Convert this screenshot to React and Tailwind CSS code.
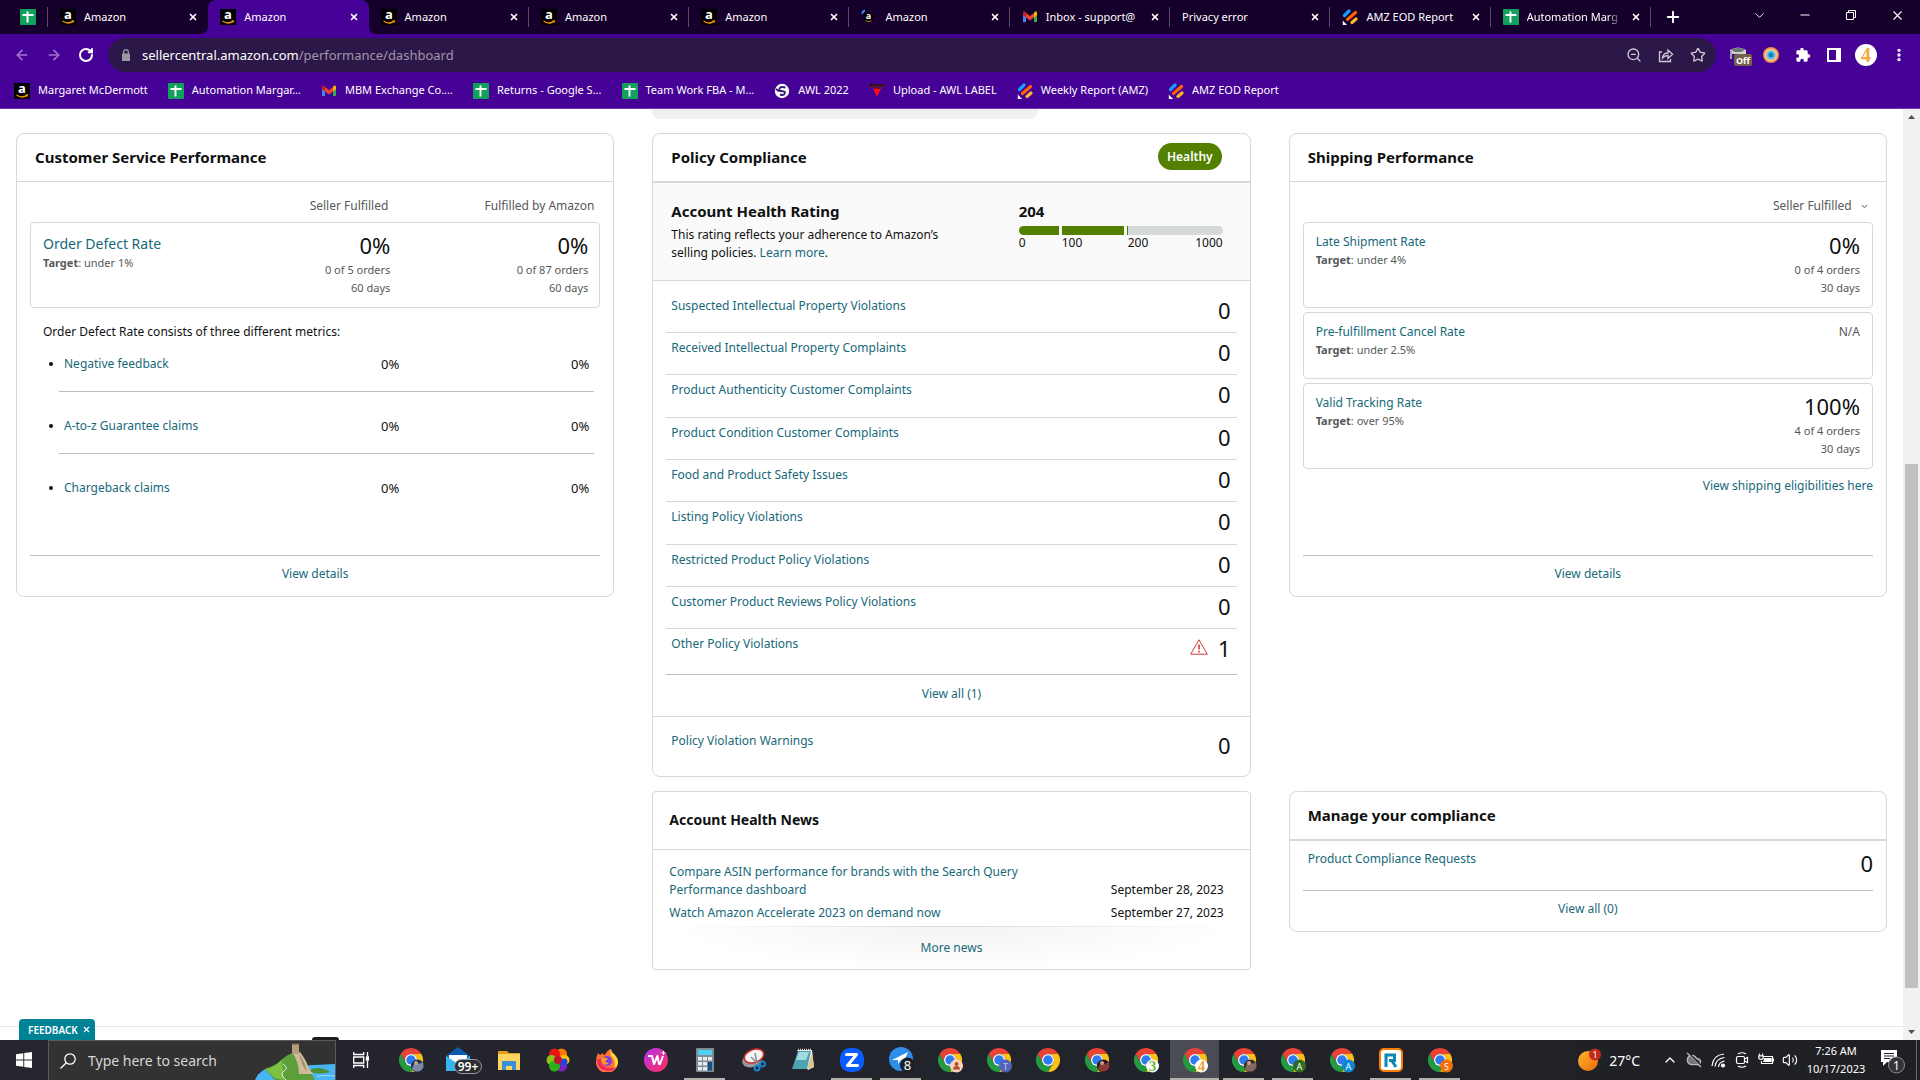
import React, { useState } from 'react';
import {
  ArrowLeft, ArrowRight, ChevronDown, ChevronUp, CloudOff, EllipsisVertical, Minus,
  Plus, RotateCw, Star, Volume2, X, ZoomOut,
} from 'lucide-react';

const VIOLATIONS = [
  { label: 'Suspected Intellectual Property Violations', count: 0 },
  { label: 'Received Intellectual Property Complaints', count: 0 },
  { label: 'Product Authenticity Customer Complaints', count: 0 },
  { label: 'Product Condition Customer Complaints', count: 0 },
  { label: 'Food and Product Safety Issues', count: 0 },
  { label: 'Listing Policy Violations', count: 0 },
  { label: 'Restricted Product Policy Violations', count: 0 },
  { label: 'Customer Product Reviews Policy Violations', count: 0 },
  { label: 'Other Policy Violations', count: 1 },
];

const DEFECT_METRICS = ['Negative feedback', 'A-to-z Guarantee claims', 'Chargeback claims'];

/* ---------- Favicons ---------- */

const AmazonIcon = () => (
  <svg className="w-4 h-4 shrink-0 overflow-visible" viewBox="0 0 16 16">
    <rect width="16" height="16" fill="#000" />
    <text x="8" y="10" textAnchor="middle" fontSize="13" fontWeight="700" fontFamily="Open Sans, sans-serif" fill="#fff">a</text>
    <path d="M2.5 12Q8 15.8 13 12.4" fill="none" stroke="#f90" strokeWidth="1.3" />
    <path d="M11.6 11.7h2.2l-.5 2" fill="none" stroke="#f90" strokeWidth=".9" />
  </svg>
);

const AmazonSmallIcon = () => (
  <svg className="w-4 h-4 shrink-0 overflow-visible" viewBox="0 0 16 16">
    <circle cx="7.5" cy="8" r="5" fill="#000" />
    <path d="M1 4.6Q2 2 4 1.4" fill="none" stroke="#3b8df0" strokeWidth="2" />
    <text x="7.5" y="10" textAnchor="middle" fontSize="9" fontWeight="700" fontFamily="Open Sans, sans-serif" fill="#fff">a</text>
    <path d="M4.5 11.8q3 1.6 6 0" fill="none" stroke="#b87414" strokeWidth="1" />
  </svg>
);

const SheetsIcon = () => (
  <svg className="w-4 h-4 shrink-0" viewBox="0 0 16 16">
    <rect width="16" height="16" rx="1" fill="#12a15c" />
    <path d="M7.5 2.5v11M2.5 6h11" stroke="#fff" strokeWidth="1.9" />
  </svg>
);

const GmailIcon = () => (
  <svg className="w-4 h-4 shrink-0" viewBox="0 0 16 16">
    <path d="M1 4.4V13h3V7.2z" fill="#4285f4" />
    <path d="M15 4.4V13h-3V7.2z" fill="#34a853" />
    <path d="M12 4.2v4.2l3-2.3V4.2c0-1.6-1.6-2-2.5-1.2z" fill="#fbbc04" />
    <path d="M1 4.2v1.9l3 2.3V4.2L3.5 3C2.6 2.2 1 2.6 1 4.2z" fill="#c5221f" />
    <path d="M4 4v4.4l4 3 4-3V4L8 7z" fill="#ea4335" />
  </svg>
);

const ReportIcon = () => (
  <svg className="w-4 h-4 shrink-0" viewBox="0 0 16 16" fill="none" strokeWidth="3.2" strokeLinecap="round">
    <path d="M2.5 6.5L7 2" stroke="#1a9bff" />
    <path d="M5.5 10.5L13.5 3.5" stroke="#ff6100" />
    <path d="M10 13.5L14 10" stroke="#ffb629" />
    <path d="M.8 11.5V16H5z" fill="#fff" />
  </svg>
);

const GlobeIcon = () => (
  <svg className="w-4 h-4 shrink-0" viewBox="0 0 16 16">
    <circle cx="8" cy="8" r="7.2" fill="#fff" />
    <path d="M11.5 4.5Q6.5 3 5.5 5.5T8.5 8.2 10 11.5Q8.5 12.5 6 11.5M2 6l3.5 2.5" fill="none" stroke="#3a1a70" strokeWidth="1.9" />
  </svg>
);

const LabelIcon = () => (
  <svg className="w-4 h-4 shrink-0" viewBox="0 0 16 16">
    <path d="M.5 1.5h15v3H.5z" fill="#5b1826" />
    <path d="M1 2h14" stroke="#1b0d10" strokeWidth="1.5" strokeDasharray="2 1" />
    <path d="M4 5h8L8 14z" fill="#ff0a14" />
    <path d="M5 5.5h6" stroke="#7d0b1a" />
  </svg>
);

const TABS = [
  { title: 'Amazon', Icon: AmazonIcon },
  { title: 'Amazon', Icon: AmazonIcon, active: true },
  { title: 'Amazon', Icon: AmazonIcon },
  { title: 'Amazon', Icon: AmazonIcon },
  { title: 'Amazon', Icon: AmazonIcon },
  { title: 'Amazon', Icon: AmazonSmallIcon },
  { title: 'Inbox - support@', Icon: GmailIcon },
  { title: 'Privacy error' },
  { title: 'AMZ EOD Report', Icon: ReportIcon },
  { title: 'Automation Marg', Icon: SheetsIcon, faded: true },
];

const BOOKMARKS = [
  { title: 'Margaret McDermott', Icon: AmazonIcon },
  { title: 'Automation Margar...', Icon: SheetsIcon },
  { title: 'MBM Exchange Co....', Icon: GmailIcon },
  { title: 'Returns - Google S...', Icon: SheetsIcon },
  { title: 'Team Work FBA - M...', Icon: SheetsIcon },
  { title: 'AWL 2022', Icon: GlobeIcon },
  { title: 'Upload - AWL LABEL', Icon: LabelIcon },
  { title: 'Weekly Report (AMZ)', Icon: ReportIcon },
  { title: 'AMZ EOD Report', Icon: ReportIcon },
];

/* ---------- Browser chrome ---------- */

// Rounded feet on both sides of the selected tab
const TabFeet = () => (
  <>
    <svg className="absolute -left-2 bottom-0 w-2 h-2" viewBox="0 0 8 8"><path d="M8 0v8H0q8 0 8-8z" fill="#460196" /></svg>
    <svg className="absolute -right-2 bottom-0 w-2 h-2" viewBox="0 0 8 8"><path d="M0 0v8h8Q0 8 0 0z" fill="#460196" /></svg>
  </>
);

const TabStrip = () => (
  <div className="flex h-[34px] bg-[#14002b] text-white text-[11px]">
    <button aria-label="Pinned sheet" className="w-12 flex items-center pl-5 relative">
      <SheetsIcon />
      <span className="absolute right-0 top-[7px] h-5 w-px bg-[#5b4b6b]" />
    </button>
    <div className="flex-1 flex min-w-0">
      {TABS.map(({ title, Icon, active, faded }, i) => (
        <div
          key={i}
          className={`flex-1 min-w-0 flex items-center gap-2 pl-3 pr-[9px] relative ${active ? 'bg-[#460196] rounded-t-lg' : ''}`}
        >
          {active && <TabFeet />}
          {Icon && <Icon />}
          <span className={`flex-1 min-w-0 whitespace-nowrap ${faded ? '[mask-image:linear-gradient(to_right,black_85%,transparent)]' : ''}`}>
            {title}
          </span>
          <button aria-label="Close tab" className="p-px">
            <X className="w-[10px] h-[10px]" strokeWidth={4} />
          </button>
          {i > 1 && <span className="absolute right-0 top-[7px] h-5 w-px bg-[#5b4b6b]" />}
        </div>
      ))}
    </div>
    <div className="w-[269px] flex items-center justify-between pl-[13px]">
      <button aria-label="New tab"><Plus className="w-[18px] h-[18px]" strokeWidth={2.5} /></button>
      <div className="flex h-full items-center pb-1">
        <button aria-label="Search tabs" className="w-[46px] flex justify-center"><ChevronDown className="w-[15px] h-[15px]" strokeWidth={1.5} /></button>
        <button aria-label="Minimize" className="w-[46px] flex justify-center"><Minus className="w-[14px] h-[14px]" strokeWidth={2} /></button>
        <button aria-label="Restore" className="w-[46px] flex justify-center">
          <svg className="w-[10px] h-[10px]" viewBox="0 0 10 10" fill="none" stroke="#fff">
            <path d="M.5 2.5h7v7h-7zM2.5 2.5v-2h7v7h-2" />
          </svg>
        </button>
        <button aria-label="Close window" className="w-[46px] flex justify-center"><X className="w-[15px] h-[15px]" strokeWidth={1.7} /></button>
      </div>
    </div>
  </div>
);

const Toolbar = () => (
  <div className="flex items-center h-[42px] bg-[#460196] pl-[14px] text-white">
    <div className="w-[94px] flex gap-4">
      <button aria-label="Back"><ArrowLeft className="w-4 h-4 text-[#a173cf]" strokeWidth={2.5} /></button>
      <button aria-label="Forward"><ArrowRight className="w-4 h-4 text-[#a173cf]" strokeWidth={2.5} /></button>
      <button aria-label="Reload"><RotateCw className="w-4 h-4" strokeWidth={3} /></button>
    </div>
    <div className="flex-1 flex items-center h-[34px] rounded-full bg-[#2c1848] pl-[14px] pr-[10px]">
      <svg className="w-2 h-3 mr-3" viewBox="0 0 8 12" fill="#9b98a3">
        <path d="M0 4.5h8V12H0z" />
        <path d="M1.7 5V3a2.3 2.3 0 0 1 4.6 0v2" fill="none" stroke="#9b98a3" strokeWidth="1.3" />
      </svg>
      <a href="#" className="flex-1 pt-px text-[13px] text-white">
        sellercentral.amazon.com<span className="text-[#a095ad]">/performance/dashboard</span>
      </a>
      <div className="flex gap-4 text-[#cfc9d6]">
        <button aria-label="Zoom"><ZoomOut className="w-4 h-4" strokeWidth={2} /></button>
        <button aria-label="Share">
          <svg className="w-4 h-4" viewBox="0 0 16 16" fill="none" stroke="currentColor" strokeWidth="1.3">
            <path d="M4 5H1.5v9.5h11V12M4.5 11q.5-5 5.5-5V3l4.500 4.300-4.500 4.200V8.500q-3.500 0-5.500 2.500z" />
          </svg>
        </button>
        <button aria-label="Bookmark"><Star className="w-4 h-4" strokeWidth={2} /></button>
      </div>
    </div>
    <div className="w-[204px] flex items-center pl-[13px]">
      <button aria-label="Blocker" className="w-8">
        <svg className="w-6 h-6" viewBox="0 0 24 24">
          <path d="M1 7q8-5 16 0v4H1z" fill="#cfd2d0" />
          <ellipse cx="9" cy="7" rx="6" ry="2" fill="#6d7370" />
          <path d="M2 8v8" stroke="#9da19f" strokeWidth="2" />
          <rect x="5" y="11" width="18" height="12" rx="2" fill="#75614b" />
          <text x="14" y="20.5" textAnchor="middle" fontSize="9" fontWeight="700" fontFamily="Open Sans, sans-serif" fill="#fff">Off</text>
        </svg>
      </button>
      <button aria-label="Extension" className="w-8">
        <svg className="w-4 h-4 ml-[2px]" viewBox="0 0 16 16">
          <circle cx="8" cy="8" r="8" fill="#f08a4b" />
          <circle cx="8" cy="8" r="6.5" fill="#fac38c" />
          <circle cx="8" cy="8" r="4.5" fill="#58c4ea" />
          <circle cx="8" cy="8" r="2.5" fill="#0d7fc4" />
        </svg>
      </button>
      <button aria-label="Extensions" className="w-8">
        <svg className="w-4 h-4 ml-[2px]" viewBox="0 0 24 24" fill="#fff">
          <path d="M20.5 11H19V7c0-1.1-.9-2-2-2h-4V3.5a2.5 2.5 0 0 0-5 0V5H4c-1.1 0-2 .9-2 2v3.8h1.5a2.7 2.7 0 0 1 0 5.4H2V20c0 1.1.9 2 2 2h3.8v-1.5a2.7 2.7 0 0 1 5.4 0V22H17c1.1 0 2-.9 2-2v-4h1.5a2.5 2.5 0 0 0 0-5z" />
        </svg>
      </button>
      <button aria-label="Side panel" className="w-[30px]">
        <svg className="w-[14px] h-[14px] ml-[2px]" viewBox="0 0 14 14">
          <path d="M1 1h12v12H1z" fill="none" stroke="#fff" strokeWidth="2" />
          <path d="M9 1h4v12H9z" fill="#fff" />
        </svg>
      </button>
      <button aria-label="Profile" className="w-[22px] h-[22px] rounded-full bg-white text-[#f5a742] font-bold text-[20px] leading-[20px] font-['Liberation_Serif',serif]">4</button>
      <button aria-label="Menu" className="ml-[14px]"><EllipsisVertical className="w-4 h-4" strokeWidth={3} /></button>
    </div>
  </div>
);

const BookmarksBar = () => (
  <nav className="flex items-center gap-5 h-[33px] pl-[14px] pb-[3px] bg-[#460196] border-b border-[#6d3bab] text-white text-[11px] whitespace-nowrap">
    {BOOKMARKS.map(({ title, Icon }) => (
      <a href="#" key={title} className="flex items-center gap-2">
        <Icon />
        {title}
      </a>
    ))}
  </nav>
);

/* ---------- Dashboard ---------- */

const Link = ({ className = '', children }) => (
  <a href="#" className={`text-[#16697a] hover:underline ${className}`}>{children}</a>
);

const Card = ({ title, badge, thick, className = '', children }) => (
  <section className={`flex flex-col border border-[#d5d9d9] rounded-lg bg-white overflow-hidden ${className}`}>
    <header className={`flex items-center justify-between pl-[18px] pr-[28px] pb-[2px] border-[#d5d9d9] ${thick ? 'h-[49px] border-b-2' : 'h-12 border-b'}`}>
      <h2 className="text-[15px] font-bold">{title}</h2>
      {badge}
    </header>
    {children}
  </section>
);

const CardFooter = ({ children }) => (
  <div className="mt-auto mx-[13px] border-t border-[#bbbfbf] pt-[9px] pb-[13px] text-center">
    <Link>{children}</Link>
  </div>
);

const Count = ({ children }) => <span className="text-[22px] leading-[26px]">{children}</span>;

const Score = ({ value, orders, days, className = '' }) => (
  <div className={`text-right text-[11px] text-[#565959] ${className}`}>
    <div className="text-[22px] leading-[24px] mb-1 text-[#0f1111]">{value}</div>
    <div>{orders}</div>
    <div>{days}</div>
  </div>
);

const Target = ({ children }) => (
  <p className="text-[11px] text-[#565959]"><b>Target</b>: {children}</p>
);

const MetricBox = ({ title, target, children }) => (
  <div className="flex justify-between border border-[#d5d9d9] rounded pt-[10px] pb-[10px] px-3 min-h-[67px]">
    <div className="flex flex-col">
      <Link>{title}</Link>
      <Target>{target}</Target>
    </div>
    {children}
  </div>
);

const CustomerService = () => (
  <Card title="Customer Service Performance" className="min-h-[464px]">
    <div className="px-[13px] pt-[15px]">
      <div className="flex justify-end pr-[6px] pb-[7px] text-[#565959]">
        <span>Seller Fulfilled</span>
        <span className="w-[206px] text-right">Fulfilled by Amazon</span>
      </div>
      <div className="flex border border-[#d5d9d9] rounded pt-[10px] pb-[10px] pl-3 pr-[11px]">
        <div className="flex-1">
          <Link className="block text-[14px] leading-[21px]">Order Defect Rate</Link>
          <Target>under 1%</Target>
        </div>
        <Score value="0%" orders="0 of 5 orders" days="60 days" />
        <Score value="0%" orders="0 of 87 orders" days="60 days" className="w-[198px]" />
      </div>
      <p className="mt-[15px] pl-[13px]">Order Defect Rate consists of three different metrics:</p>
      <ul className="ml-[29px] mr-[6px]">
        {DEFECT_METRICS.map((metric) => (
          <li key={metric} className="flex items-center px-[5px] pt-[25px] first:pt-[14px] pb-[18px] border-b last:border-b-0 border-[#bbbfbf]">
            <span className="-ml-[15px] mr-[11px] w-1 h-1 rounded-full bg-[#0f1111]" />
            <Link className="flex-1">{metric}</Link>
            <span className="text-[13px]">0%</span>
            <span className="w-[190px] text-right text-[13px]">0%</span>
          </li>
        ))}
      </ul>
    </div>
    <CardFooter>View details</CardFooter>
  </Card>
);

const WarningIcon = () => (
  <svg className="w-[18px] h-4 mr-[10px] mt-1" viewBox="0 0 18 16" fill="none" stroke="#d13a3a">
    <path d="M9 .8L17.3 15.2H.7z" strokeLinejoin="round" />
    <path d="M9 5.5v5M9 11.8v1.6" strokeWidth="1.6" />
  </svg>
);

const PolicyCompliance = () => (
  <Card
    title="Policy Compliance"
    thick
    badge={<span className="px-[9px] rounded-full bg-[#538000] text-white text-[12px] font-semibold leading-[27px]">Healthy</span>}
  >
    <div className="flex justify-between bg-[#fafafa] border-b border-[#d5d9d9] pl-[18px] pr-[27px] pt-[18px] pb-[18px]">
      <div className="w-[300px]">
        <h3 className="text-[15px] font-bold leading-5 mb-[5px]">Account Health Rating</h3>
        <p>This rating reflects your adherence to Amazon’s selling policies. <Link>Learn more</Link>.</p>
      </div>
      <div className="w-[204px]">
        <div className="text-[15px] font-bold leading-5 mb-[5px]">204</div>
        <div className="flex gap-[3px] h-[9px] rounded-full overflow-hidden">
          <span className="w-10 bg-[#538000]" />
          <span className="w-[62px] bg-[#538000]" />
          <span className="flex-1 bg-[#d5d9d9] border-l border-[#538000]" />
        </div>
        <div className="flex leading-4">
          <span className="w-[43px]">0</span>
          <span className="w-[66px]">100</span>
          <span className="flex-1">200</span>
          <span>1000</span>
        </div>
      </div>
    </div>
    <ul className="px-[13px] pt-[10px]">
      {VIOLATIONS.map(({ label, count }) => (
        <li key={label} className="flex pl-[5px] pr-[6px] pt-[6px] pb-[9px] nth-3:pb-[10px] nth-6:pb-[10px] last:pb-[13px] border-b border-[#d5d9d9] last:border-[#bbbfbf]">
          <Link className="flex-1">{label}</Link>
          {count > 0 && <WarningIcon />}
          <Count>{count}</Count>
        </li>
      ))}
    </ul>
    <div className="pt-[10px] pb-[13px] text-center border-b border-[#d5d9d9]">
      <Link>View all (1)</Link>
    </div>
    <div className="flex pl-[18px] pr-[19px] pt-[15px] pb-[18px]">
      <Link className="flex-1">Policy Violation Warnings</Link>
      <Count>0</Count>
    </div>
  </Card>
);

const ShippingPerformance = () => (
  <Card title="Shipping Performance" className="min-h-[464px]">
    <div className="px-[13px] pt-[15px]">
      <div className="flex justify-end items-center pb-[7px] pr-1 text-[#565959]">
        <select aria-label="Fulfilment channel" className="appearance-none bg-transparent h-[18px] leading-[18px]">
          <option>Seller Fulfilled</option>
        </select>
        <ChevronDown className="w-[9px] h-[9px] ml-2 text-[#888c8c]" strokeWidth={3} />
      </div>
      <div className="flex flex-col gap-1">
        <MetricBox title="Late Shipment Rate" target="under 4%">
          <Score value="0%" orders="0 of 4 orders" days="30 days" />
        </MetricBox>
        <MetricBox title="Pre-fulfillment Cancel Rate" target="under 2.5%">
          <span className="text-[#565959]">N/A</span>
        </MetricBox>
        <MetricBox title="Valid Tracking Rate" target="over 95%">
          <Score value="100%" orders="4 of 4 orders" days="30 days" />
        </MetricBox>
      </div>
      <div className="mt-2 text-right"><Link>View shipping eligibilities here</Link></div>
    </div>
    <CardFooter>View details</CardFooter>
  </Card>
);

const AccountHealthNews = () => (
  <section className="border border-[#d5d9d9] rounded bg-white">
    <h2 className="px-4 pb-[2px] text-[14px] font-bold leading-[55px] border-b border-[#d5d9d9]">Account Health News</h2>
    <div className="pl-4 pr-[26px] pt-[13px] pb-1 flex flex-col gap-[5px]">
      <div className="flex justify-between items-end">
        <Link className="w-[370px]">Compare ASIN performance for brands with the Search Query Performance dashboard</Link>
        <span>September 28, 2023</span>
      </div>
      <div className="flex justify-between items-end">
        <Link>Watch Amazon Accelerate 2023 on demand now</Link>
        <span>September 27, 2023</span>
      </div>
    </div>
    <div className="mx-4">
      <div className="h-px bg-linear-to-r from-white via-[#d9d9d9] to-white" />
      <div className="h-[42px] leading-[42px] text-center bg-[radial-gradient(ellipse_at_top,#f3f3f3,#ffffff_70%)]">
        <Link>More news</Link>
      </div>
    </div>
  </section>
);

const ManageCompliance = () => (
  <Card title="Manage your compliance" thick>
    <div className="flex pl-[18px] pr-[13px] pt-[9px] pb-[14px]">
      <Link className="flex-1">Product Compliance Requests</Link>
      <Count>0</Count>
    </div>
    <CardFooter>View all (0)</CardFooter>
  </Card>
);

const Scrollbar = () => (
  <div className="w-[17px] bg-[#f1f1f1] flex flex-col items-center py-[6px]">
    <svg className="w-[7px] h-[4px]" viewBox="0 0 7 4"><path d="M0 4L3.5 0 7 4z" fill="#505050" /></svg>
    <div className="flex-[345_1_0%]" />
    <div className="flex-[524_1_0%] w-[13px] bg-[#c1c1c1]" />
    <div className="flex-[42_1_0%]" />
    <svg className="w-[7px] h-[4px]" viewBox="0 0 7 4"><path d="M0 0L3.5 4 7 0z" fill="#505050" /></svg>
  </div>
);

const Feedback = () => {
  const [open, setOpen] = useState(true);
  if (!open) return null;
  return (
    <div className="absolute left-[19px] bottom-0 flex items-center gap-1 h-[21px] pl-[9px] pr-1 rounded-t bg-[#008296] text-white text-[10px] font-semibold">
      <button>FEEDBACK</button>
      <button aria-label="Dismiss feedback" onClick={() => setOpen(false)}><X className="w-[9px] h-[9px]" strokeWidth={3} /></button>
    </div>
  );
};

/* ---------- Taskbar ---------- */

const ChromeIcon = ({ color, label, labelColor = '#fff', serif, children }) => (
  <svg className="w-7 h-7" viewBox="0 0 56 56">
    <g transform="translate(4 4)">
      <path d="M3.2 12A24 24 0 0 1 44.8 12H24A12 12 0 0 0 13.6 30z" fill="#ea4335" />
      <path d="M44.8 12A24 24 0 0 1 24 48L34.4 30A12 12 0 0 0 24 12z" fill="#fbc116" />
      <path d="M24 48A24 24 0 0 1 3.2 12L13.6 30A12 12 0 0 0 34.4 30z" fill="#249a41" />
      <circle cx="24" cy="24" r="12" fill="#fff" />
      <circle cx="24" cy="24" r="9.5" fill="#2f7bf0" />
    </g>
    {color && <circle cx="41" cy="40" r="13" fill={color} />}
    {label && (
      <text
        x="41"
        y={serif ? 50 : 47}
        textAnchor="middle"
        fontSize={serif ? 30 : 18}
        fontWeight={serif ? 700 : 400}
        fontFamily={serif ? 'Liberation Serif, serif' : 'Noto Sans, sans-serif'}
        fill={labelColor}
      >
        {label}
      </text>
    )}
    {children}
  </svg>
);

const PhotoBadge = ({ base, shade }) => (
  <g>
    <circle cx="41" cy="40" r="13" fill={base} />
    <path d="M30 46q5-16 11-12t11-4l1 12q-6 12-18 8z" fill={shade} />
    <circle cx="38" cy="34" r="4" fill="#c6a08c" />
  </g>
);

const MailIcon = () => (
  <svg className="w-9 h-7 ml-2" viewBox="0 0 36 28">
    <path d="M0 10L12 1l12 9v15H0z" fill="#0b5cad" />
    <path d="M3 9h18v10H3z" fill="#fff" />
    <path d="M0 10l12 8 12-8v15H0z" fill="#35b5f1" />
    <rect x="8.5" y="13.5" width="27" height="14" rx="7" fill="#2b2c30" stroke="#9a9a9a" />
    <text x="22" y="25" textAnchor="middle" fontSize="12" fontWeight="600" fontFamily="Noto Sans, sans-serif" fill="#fff">99+</text>
  </svg>
);

const FolderIcon = () => (
  <svg className="w-6 h-6" viewBox="0 0 24 24">
    <path d="M1 3h9l2 2h11v17H1z" fill="#e0a11b" />
    <path d="M1 6h22v16H1z" fill="#fdd45f" />
    <path d="M5 22v-9h14v9h-4v-4H9v4z" fill="#3b8fd8" />
  </svg>
);

const FlowerIcon = () => (
  <svg className="w-6 h-6" viewBox="0 0 24 24">
    <circle cx="15.5" cy="6" r="5.5" fill="#ff7a00" />
    <circle cx="8.5" cy="6" r="5.5" fill="#e81313" />
    <circle cx="5.5" cy="12" r="5" fill="#8fc31a" />
    <circle cx="18.5" cy="12" r="5" fill="#ffc400" />
    <circle cx="15.5" cy="18" r="5.5" fill="#7a1fc0" />
    <circle cx="8.5" cy="18" r="5.5" fill="#2fae1a" />
    <circle cx="18" cy="14" r="3.5" fill="#1f46e8" />
    <circle cx="12" cy="12" r="4" fill="#c01430" />
  </svg>
);

const FirefoxIcon = () => (
  <svg className="w-6 h-6" viewBox="0 0 24 24">
    <path d="M3 5l2 2 3-2q0 2 2 2 2-5 6-6 0 3 3 5 4 4 4 8a11 11 0 0 1-22 0q0-5 2-9z" fill="#ff7139" />
    <path d="M16 1q0 3 3 5 4 4 4 8 0 5-5 8 4-7-1-13-3-3-1-8z" fill="#ffd43a" />
    <path d="M2 12q1 11 11 11 6 0 8-4-7 3-12-1-4-3-3-8z" fill="#f0295e" />
    <circle cx="12" cy="13" r="5" fill="#7a3fe0" />
    <path d="M7 10q4-1 6 1l-3 2q1 2 4 2-3 3-6 1-2-3-1-6z" fill="#ff9a1f" />
  </svg>
);

const WpsIcon = () => (
  <svg className="w-6 h-6" viewBox="0 0 24 24">
    <defs>
      <linearGradient id="wps" x1="0" y1="0" x2="1" y2="1">
        <stop offset="0" stopColor="#b335f5" />
        <stop offset="1" stopColor="#ff2d55" />
      </linearGradient>
    </defs>
    <circle cx="12" cy="12" r="12" fill="url(#wps)" />
    <path d="M4 8h4l2 8 3.500-8 1.500 8h1l3-8" fill="none" stroke="#fff" strokeWidth="2" strokeLinejoin="round" />
    <path d="M19.5 3v4M17.5 5h4" stroke="#fff" strokeWidth="1" />
  </svg>
);

const CalculatorIcon = () => (
  <svg className="w-6 h-6" viewBox="0 0 24 24">
    <rect x="3" width="18" height="24" rx="1" fill="#7e8b95" />
    <rect x="5" y="2" width="14" height="5" fill="#4fd2f2" />
    <path d="M5 9h4v3.5H5zM10 9h4v3.5h-4zM15 9h4v3.5h-4zM5 14h4v3.5H5zM10 14h4v3.5h-4zM5 19h4v3.5H5zM10 19h4v3.5h-4z" fill="#e8edf0" />
    <path d="M15 14h4v8.5h-4z" fill="#12508c" />
  </svg>
);

const SnipIcon = () => (
  <svg className="w-6 h-6" viewBox="0 0 24 24">
    <ellipse cx="10" cy="12" rx="10" ry="7" fill="#999" transform="rotate(-20 10 12)" />
    <ellipse cx="12" cy="8" rx="10" ry="6.5" fill="#f5f5f5" stroke="#cf2b2b" strokeWidth="1.6" transform="rotate(-20 12 8)" />
    <path d="M13 5l2 11M9 9l8 8" stroke="#8a8f94" strokeWidth="1.5" />
    <circle cx="15" cy="20" r="2.5" fill="none" stroke="#1b87c9" strokeWidth="2" />
    <circle cx="20.5" cy="16" r="2.5" fill="none" stroke="#1b87c9" strokeWidth="2" />
  </svg>
);

const NotepadIcon = () => (
  <svg className="w-6 h-6" viewBox="0 0 24 24">
    <path d="M6 2h15l2 17-6 3z" fill="#f0efe6" />
    <path d="M7 3h13l-4 18H1z" fill="#4fa3b5" />
    <path d="M8 4h10l-3 8H5z" fill="#a4dbe2" />
    <path d="M7 1.5h14" stroke="#d8d8d8" strokeWidth="1.5" strokeDasharray="1 1" />
    <path d="M16 21l5-16 2 14z" fill="#d9c38f" />
  </svg>
);

const ZoomAppIcon = () => (
  <svg className="w-6 h-6" viewBox="0 0 24 24">
    <rect width="24" height="24" rx="10" fill="#0b5cff" />
    <path d="M6.5 6.5h10L7.5 17.5h10" fill="none" stroke="#fff" strokeWidth="3" strokeLinejoin="round" strokeLinecap="round" />
  </svg>
);

const PlaneIcon = () => (
  <svg className="w-7 h-7 ml-1" viewBox="0 0 28 28">
    <circle cx="12" cy="13" r="12" fill="#2f8ee8" />
    <path d="M3 14L19 6l-3 7-4 1-3 4v-4z" fill="#fff" />
    <circle cx="18.5" cy="19" r="7.5" fill="#1c1f26" />
    <text x="18.5" y="24" textAnchor="middle" fontSize="13" fontFamily="Noto Sans, sans-serif" fill="#fff">8</text>
  </svg>
);

const RIcon = () => (
  <svg className="w-6 h-6" viewBox="0 0 24 24">
    <rect x="1" y="1" width="22" height="22" rx="4" fill="#fff" stroke="#ff7c00" strokeWidth="2" />
    <path d="M7 19V7h8.5v5.5H10M13 13l4 6" fill="none" stroke="#0a86b8" strokeWidth="3" />
  </svg>
);

const APPS = [
  { name: 'Chrome', icon: <ChromeIcon><PhotoBadge base="#22304f" shade="#7d8ba8" /></ChromeIcon> },
  { name: 'Mail', icon: <MailIcon /> },
  { name: 'File Explorer', icon: <FolderIcon /> },
  { name: 'Photos', icon: <FlowerIcon /> },
  { name: 'Firefox', icon: <FirefoxIcon /> },
  { name: 'WPS Office', icon: <WpsIcon /> },
  { name: 'Calculator', icon: <CalculatorIcon />, open: true },
  { name: 'Snipping Tool', icon: <SnipIcon /> },
  { name: 'Notepad', icon: <NotepadIcon /> },
  { name: 'Zoom', icon: <ZoomAppIcon />, open: true },
  { name: 'Messenger', icon: <PlaneIcon />, open: true },
  {
    name: 'Chrome profile',
    icon: (
      <ChromeIcon color="#fbd3bd">
        <circle cx="41" cy="36" r="4" fill="#b0512a" />
        <path d="M34 47q0-7 7-7t7 7z" fill="#b0512a" />
      </ChromeIcon>
    ),
  },
  { name: 'Chrome T', icon: <ChromeIcon color="#5162b8" label="T" labelColor="#c2c8ea" /> },
  { name: 'Chrome default', icon: <ChromeIcon /> },
  { name: 'Chrome photo', icon: <ChromeIcon><PhotoBadge base="#2a1418" shade="#8c3a3a" /></ChromeIcon> },
  { name: 'Chrome 3', icon: <ChromeIcon color="#fff" label="3" labelColor="#6db83c" serif /> },
  { name: 'Chrome 4', icon: <ChromeIcon color="#fff" label="4" labelColor="#f5a031" serif />, active: true },
  { name: 'Chrome team', icon: <ChromeIcon><PhotoBadge base="#3a2e2b" shade="#86695e" /></ChromeIcon>, open: true },
  { name: 'Chrome A', icon: <ChromeIcon color="#2f6b22" label="A" />, open: true },
  { name: 'Chrome B', icon: <ChromeIcon color="#0c86d6" label="A" /> },
  { name: 'R app', icon: <RIcon />, open: true },
  { name: 'Chrome S', icon: <ChromeIcon color="#f46d0b" label="S" />, open: true },
];

const CastleScene = () => (
  <svg className="w-20 h-[38px] shrink-0" viewBox="0 0 80 38">
    <path d="M0 38q4-11 18-13l62-3v16z" fill="#46b4f5" />
    <path d="M10 27q10-3 16-9 7-6 12-7 8 1 14 12l8 15H20z" fill="#5b9e3a" />
    <path d="M10 27q9-1 17-9l2 20-9-2z" fill="#7cc142" />
    <path d="M37 10h8q6 8 8 14l5 8H44q0-12-7-22z" fill="#cdbb9c" />
    <path d="M44 12q6 8 8 18l-4-6z" fill="#9c8a6e" />
    <path d="M37 2h7v10h-7z" fill="#b99a7a" />
    <path d="M36.5 2h8" stroke="#7b5a42" strokeWidth="1.5" strokeDasharray="2 1" />
    <path d="M28 22q6 4 1 7t2 9" fill="none" stroke="#e8f0d8" strokeWidth="1" />
    <path d="M56 27q10-3 19 3-10 3-19 0z" fill="#4e8f35" />
    <path d="M62 34q8-1 18 0" stroke="#a8defc" fill="none" />
  </svg>
);

const Taskbar = () => (
  <footer className="flex h-10 bg-linear-to-r from-[#26242f] via-[#22242c] to-[#1f2023] text-white shrink-0">
    <button aria-label="Start" className="w-12 flex items-center justify-center">
      <svg className="w-4 h-4" viewBox="0 0 16 16" fill="#fff">
        <path d="M0 2.2L7.3 1.2v6.4H0zM8.2 1.1L16 0v7.6H8.2zM0 8.5h7.3v6.3L0 13.8zM8.2 8.5H16V16l-7.8-1.1z" />
      </svg>
    </button>
    <div className="w-72 flex items-center bg-[#323232] border border-[#5a5a5a] border-b-0 pl-[11px]">
      <svg className="w-4 h-4" viewBox="0 0 16 16" fill="none" stroke="#fff" strokeWidth="1.3">
        <circle cx="10" cy="6" r="5.2" />
        <path d="M6.3 9.7L.5 15.5" />
      </svg>
      <input
        type="text"
        aria-label="Search"
        placeholder="Type here to search"
        className="flex-1 min-w-0 ml-3 bg-transparent outline-none text-[14px] placeholder-[#d6d6d6]"
      />
      <CastleScene />
    </div>
    <button aria-label="Task view" className="w-[50px] flex items-center justify-center">
      <svg className="w-4 h-4" viewBox="0 0 16 16" fill="none" stroke="#fff" strokeWidth="1.3">
        <path d="M.7 0v2.5h10V0M.7 16v-2.5h10V16M.7 5h10v6H.7zM14.5 0v4M14.5 9v7" />
        <path d="M13.5 5h2v3h-2z" fill="#fff" />
      </svg>
    </button>
    {APPS.map(({ name, icon, open, active }) => (
      <button
        key={name}
        aria-label={name}
        className={`w-[49px] flex items-center justify-center relative ${active ? 'bg-[#4b4c53]' : ''}`}
      >
        {icon}
        {(open || active) && (
          <span className={`absolute bottom-0 h-[2px] bg-[#b3b1ab] ${active ? 'inset-x-0' : 'inset-x-1'}`} />
        )}
      </button>
    ))}
    <div className="flex-1 flex items-center justify-end gap-2">
      <button className="flex items-center gap-2 text-[14px] mr-[14px]">
        <svg className="w-6 h-6" viewBox="0 0 24 24">
          <defs>
            <linearGradient id="sun" x1="0" y1="0" x2="1" y2="1">
              <stop offset="0" stopColor="#ffb62e" />
              <stop offset="1" stopColor="#ee6a0c" />
            </linearGradient>
          </defs>
          <circle cx="11" cy="13" r="10" fill="url(#sun)" />
          <circle cx="18" cy="6.5" r="6" fill="#c42b1c" />
          <text x="18" y="10" textAnchor="middle" fontSize="9" fontFamily="Noto Sans, sans-serif" fill="#fff">1</text>
        </svg>
        27°C
      </button>
      <button aria-label="Hidden icons"><ChevronUp className="w-4 h-4" strokeWidth={2} /></button>
      <button aria-label="Cloud"><CloudOff className="w-4 h-4 text-[#b9b9b9]" fill="#777" strokeWidth={2} /></button>
      <button aria-label="Network">
        <svg className="w-4 h-4" viewBox="0 0 16 16" fill="none" stroke="#fff" strokeWidth="1.2">
          <path d="M2 14Q3 3 14 2M5 14.5Q6 6.5 14.5 5.5M8.5 15q.5-5 6-6" />
          <circle cx="13" cy="13.5" r="1.5" fill="#fff" />
        </svg>
      </button>
      <button aria-label="Meet now">
        <svg className="w-4 h-4" viewBox="0 0 16 16" fill="none" stroke="#fff" strokeWidth="1.2">
          <rect x="2.5" y="4.5" width="8" height="7" rx="1.5" />
          <path d="M10.5 7l3-1.5v5l-3-1.5M4 2q4-2.5 8 0M4 14q4 2.5 8 0" />
        </svg>
      </button>
      <button aria-label="Battery">
        <svg className="w-4 h-4" viewBox="0 0 16 16" fill="none" stroke="#fff" strokeWidth="1.2">
          <path d="M5 4.5h9.5v7H3.500V9M15.5 6.5v3M1.5 1.5v2M4.5 1.5v2M.8 3.8h4.4v2q0 1.5-2.2 1.5T.8 5.8z" />
          <path d="M6.5 6.5H13v3H6z" fill="#fff" />
        </svg>
      </button>
      <button aria-label="Volume"><Volume2 className="w-4 h-4" strokeWidth={1.7} /></button>
      <button className="w-[60px] text-center text-[11px] leading-[18px]">
        <div>7:26 AM</div>
        <div>10/17/2023</div>
      </button>
      <button aria-label="Notifications" className="ml-1">
        <svg className="w-7 h-7" viewBox="0 0 28 28">
          <path d="M3 4h16v12H9l-4 4v-4H3z" fill="#fff" />
          <path d="M6 7.5h10M6 10h10M6 12.5h6" stroke="#222" strokeWidth="1.2" />
          <circle cx="18.5" cy="19" r="8" fill="#333438" stroke="#8d8d8d" />
          <text x="18.5" y="23.5" textAnchor="middle" fontSize="12" fontFamily="Noto Sans, sans-serif" fill="#fff">1</text>
        </svg>
      </button>
      <span className="ml-[2px] h-full w-1 border-l border-[#6a6a6a]" />
    </div>
  </footer>
);

const App = () => {
  return (
    <div className="h-screen flex flex-col bg-white font-['Noto_Sans','Open_Sans',sans-serif]">
      <TabStrip />
      <Toolbar />
      <BookmarksBar />

      <div className="flex-1 min-h-0 flex text-[12px] leading-[18px] text-[#0f1111]">
        <main className="flex-1 min-w-0 flex flex-col relative overflow-hidden">
          <div className="grid grid-cols-3 gap-x-[38px] px-4">
            <div className="col-start-2 h-[10px] w-[386px] rounded-b-lg bg-[#eff1f1]" />
          </div>

          {/* Cards */}
          <div className="grid grid-cols-3 items-start gap-x-[38px] gap-y-[14px] px-4 pt-[14px]">
            <CustomerService />
            <PolicyCompliance />
            <ShippingPerformance />
            <div className="col-start-2"><AccountHealthNews /></div>
            <ManageCompliance />
          </div>

          <div className="mt-auto h-[14px] border-t border-[#e7e7e7]" />
          <Feedback />
          <div className="absolute left-[312px] bottom-0 w-[27px] h-[3px] rounded-t bg-[#1c1c1c]" />
        </main>
        <Scrollbar />
      </div>

      <Taskbar />
    </div>
  );
};

export default App;
